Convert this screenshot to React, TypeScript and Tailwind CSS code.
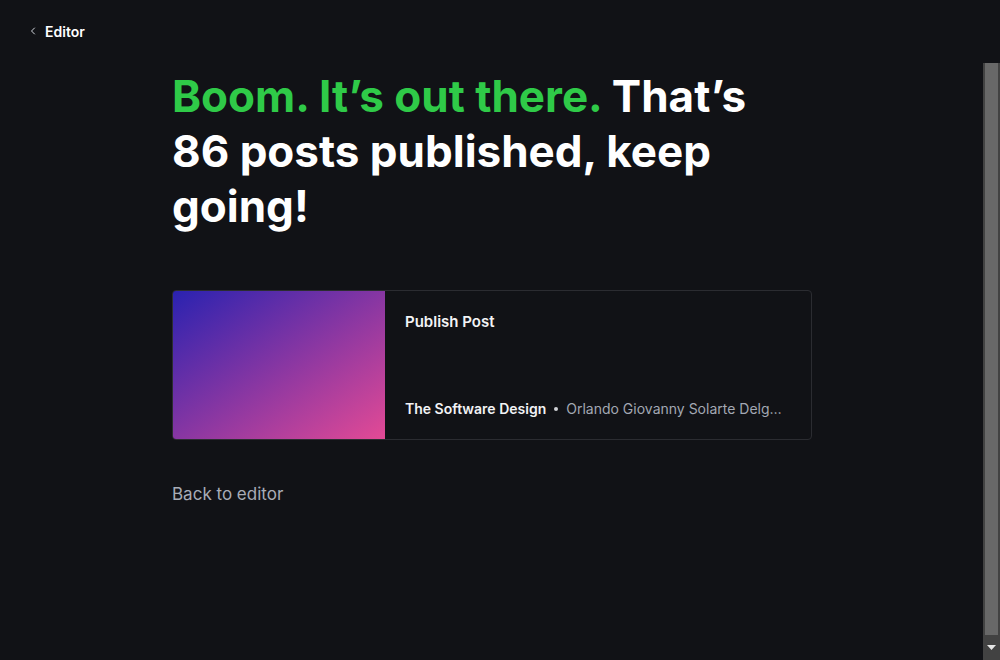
import { ChevronLeft } from 'lucide-react'

const font = { fontFamily: 'Inter, "Noto Sans", sans-serif' }

function FakeScrollbar() {
  return (
    <div className="flex w-[17px] shrink-0 flex-col bg-[#424242]">
      <div className="mx-[2px] flex-1 bg-[#686868]" />
      <div className="flex h-[25px] items-center justify-center">
        <svg width="9" height="5" viewBox="0 0 9 5">
          <path d="M0 0h9L4.5 5z" fill="#e5e5e5" />
        </svg>
      </div>
    </div>
  )
}

export default function App() {
  return (
    <div className="flex h-[660px] w-[1000px] flex-col overflow-hidden bg-[#111216] text-white" style={font}>
      {/* Top bar */}
      <div className="flex h-[63px] shrink-0 items-center pl-[27px] pb-[1px]">
        <button className="flex items-center gap-[6px] text-[14px] font-semibold text-white">
          <ChevronLeft size={12} strokeWidth={2} className="text-gray-300" />
          Editor
        </button>
      </div>

      <div className="flex min-h-0 flex-1">
        <main className="flex-1 pl-[172px]">
          <div className="w-[640px]">
            <h1 className="max-w-[600px] pt-[6px] text-[44px] font-bold leading-[55px]">
              <span className="text-[#2fca48]">Boom. It’s out there.</span> That’s 86 posts published, keep going!
            </h1>

            {/* Post card */}
            <div className="mt-[56px] flex h-[150px] overflow-hidden rounded-[4px] border border-[#2b2c31]">
              <div className="w-[212px] shrink-0 bg-[linear-gradient(to_bottom_right,#2a22b0,#e34a95)]" />
              <div className="flex min-w-0 flex-1 flex-col justify-between pl-[20px] pr-[26px] pt-[20px] pb-[20px]">
                <div className="text-[15px] font-semibold text-[#f2f3f5]">Publish Post</div>
                <div className="flex items-center gap-[8px] text-[14px] whitespace-nowrap">
                  <span className="font-semibold text-[#f2f3f5]">The Software Design</span>
                  <span className="h-[4px] w-[4px] shrink-0 rounded-full bg-[#d0d2d6]" />
                  <span className="truncate text-[#a3a8b3]">Orlando Giovanny Solarte Delgado</span>
                </div>
              </div>
            </div>

            <a className="mt-[42px] block text-[17px] text-[#a8acb6]" href="#">
              Back to editor
            </a>
          </div>
        </main>
        <FakeScrollbar />
      </div>
    </div>
  )
}
